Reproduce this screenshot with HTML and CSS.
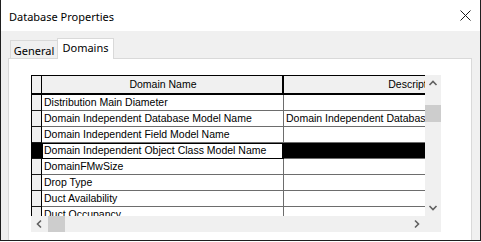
FILE: index.html
```html
<!DOCTYPE html>
<html lang="en">
<head>
  <meta charset="UTF-8">
  <title>Database Properties</title>
  <link rel="stylesheet" href="styles.css">
</head>
<body>
  <div class="window">
    <div class="titlebar">
      <span class="title">Database Properties</span>
      <svg class="close" width="11" height="11" viewBox="0 0 11 11">
        <path d="M0.5 0.5 L10.5 10.5 M10.5 0.5 L0.5 10.5" stroke="#1a1a1a" stroke-width="1" fill="none"/>
      </svg>
    </div>
    <div class="body">
      <div class="tabs">
        <span class="tab">General</span>
        <span class="tab active">Domains</span>
      </div>
      <div class="panel">
        <div class="gridbox">
          <div class="viewport">
            <div class="row head">
              <span class="sel"></span>
              <span class="cell name">Domain Name</span>
              <span class="cell desc">Description</span>
            </div>
            <div class="row">
              <span class="sel"></span>
              <span class="cell name">Distribution Main Diameter</span>
              <span class="cell desc"></span>
            </div>
            <div class="row">
              <span class="sel"></span>
              <span class="cell name">Domain Independent Database Model Name</span>
              <span class="cell desc">Domain Independent Database Model Name</span>
            </div>
            <div class="row">
              <span class="sel"></span>
              <span class="cell name">Domain Independent Field Model Name</span>
              <span class="cell desc"></span>
            </div>
            <div class="row current">
              <span class="sel"></span>
              <span class="cell name">Domain Independent Object Class Model Name</span>
              <span class="cell desc"></span>
            </div>
            <div class="row">
              <span class="sel"></span>
              <span class="cell name">DomainFMwSize</span>
              <span class="cell desc"></span>
            </div>
            <div class="row">
              <span class="sel"></span>
              <span class="cell name">Drop Type</span>
              <span class="cell desc"></span>
            </div>
            <div class="row">
              <span class="sel"></span>
              <span class="cell name">Duct Availability</span>
              <span class="cell desc"></span>
            </div>
            <div class="row">
              <span class="sel"></span>
              <span class="cell name">Duct Occupancy</span>
              <span class="cell desc"></span>
            </div>
          </div>
          <div class="vscroll">
            <svg class="arrow" width="16" height="16" viewBox="0 0 16 16">
              <path d="M4.5 10 L8 6.5 L11.5 10" stroke="#606060" stroke-width="1.6" fill="none"/>
            </svg>
            <div class="track"><div class="thumb"></div></div>
            <svg class="arrow" width="16" height="16" viewBox="0 0 16 16">
              <path d="M4.5 6 L8 9.5 L11.5 6" stroke="#606060" stroke-width="1.6" fill="none"/>
            </svg>
          </div>
          <div class="hscroll">
            <svg class="arrow" width="17" height="16" viewBox="0 0 17 16">
              <path d="M10 4.5 L6.5 8 L10 11.5" stroke="#606060" stroke-width="1.6" fill="none"/>
            </svg>
            <div class="track"><div class="thumb"></div></div>
            <svg class="arrow" width="17" height="16" viewBox="0 0 17 16">
              <path d="M7 4.5 L10.5 8 L7 11.5" stroke="#606060" stroke-width="1.6" fill="none"/>
            </svg>
          </div>
        </div>
      </div>
    </div>
  </div>
</body>
</html>
```

FILE: styles.css
```css
body{
  margin: 0;
  background: #fff;
}

.window{
  width: 481px;
  height: 241px;
  box-sizing: border-box;
  border: 1px solid #1f1f1f;
  border-top: none;
  display: flex;
  flex-direction: column;
  font-family: "Noto Sans", "Open Sans", sans-serif;
  color: #000;
}

.titlebar{
  height: 31px;
  flex: none;
  display: flex;
  align-items: center;
  justify-content: space-between;
  padding: 0 9px 0 8px;
  background: #fff;
}

.title{
  font-size: 11px;
  margin-top: 1px;
}

.close{
  margin-bottom: 1px;
}

.body{
  flex: 1;
  display: flex;
  flex-direction: column;
  background: #f0f0f0;
  padding: 7px 8px 0 7px;
  min-height: 0;
}

.tabs{
  display: flex;
  align-items: flex-end;
  height: 21px;
  padding-left: 2px;
  position: relative;
  z-index: 1;
  margin-bottom: -1px;
}

.tab{
  font-size: 11px;
  height: 18px;
  box-sizing: border-box;
  border: 1px solid #d9d9d9;
  border-bottom: none;
  padding-top: 2px;
  text-align: center;
  line-height: 16px;
  background: #f0f0f0;
  margin-bottom: 1px;
  width: 48px;
}

.tab.active{
  height: 21px;
  width: 57px;
  margin-left: -1px;
  margin-bottom: 0;
  background: #fff;
  padding-top: 0;
  line-height: 17px;
}

.panel{
  flex: 1;
  background: #fff;
  border: 1px solid #d9d9d9;
  border-bottom: none;
  padding: 16px 0 0 22px;
}

.gridbox{
  display: grid;
  grid-template-columns: 394px 16px;
  grid-template-rows: 141px 16px;
  font-family: "Liberation Sans", Arial, sans-serif;
  font-size: 10.5px;
}

.viewport{
  overflow: hidden;
  border-top: 1px solid #000;
  border-left: 1px solid #000;
}

.row{
  display: flex;
  height: 16px;
}

.row.head{
  height: 19px;
}

.sel,
.cell{
  flex: none;
  box-sizing: border-box;
  border-right: 1px solid #6d6d6d;
  border-bottom: 1px solid #6d6d6d;
  white-space: nowrap;
  overflow: hidden;
  line-height: 15px;
}

.sel{
  width: 10px;
  background: #f0f0f0;
  border-right-color: #000;
  border-bottom-color: #1a1a1a;
}

.name{
  width: 242px;
  padding-left: 2px;
}

.desc{
  width: 260px;
  padding-left: 2px;
}

.head .cell{
  background: #f0f0f0;
  text-align: center;
  border-bottom: 2px solid #000;
  line-height: 17px;
}

.head .sel{
  border-bottom: 2px solid #000;
}

.head .name{
  border-right: 2px solid #000;
}

.current .sel{
  background: #000;
}

.current .name{
  border: 1px solid #000;
  border-right-width: 2px;
  line-height: 13px;
  padding-left: 1px;
}

.current .desc{
  background: #000;
}

.vscroll,
.hscroll{
  background: #f0f0f0;
  display: flex;
}

.vscroll{
  flex-direction: column;
  grid-row: 1 / 3;
  grid-column: 2;
}

.vscroll .track{
  flex: 1;
  padding-top: 14px;
}

.vscroll .thumb{
  height: 17px;
  background: #cdcdcd;
}

.vscroll .arrow:last-child{
  margin-bottom: 16px;
}

.hscroll{
  grid-row: 2;
  grid-column: 1;
}

.hscroll .track{
  flex: 1;
}

.hscroll .thumb{
  width: 17px;
  height: 16px;
  background: #cdcdcd;
}
```
